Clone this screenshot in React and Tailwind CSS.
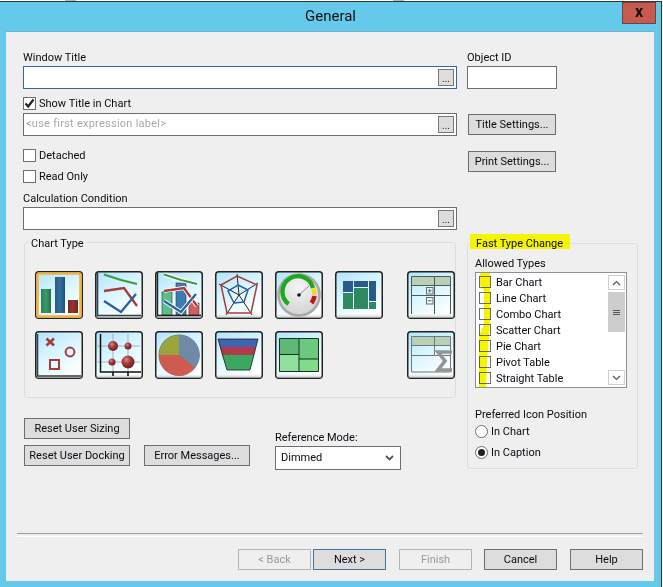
import React from "react";

const FONT = "font-['Roboto',sans-serif]";
const TEXT = "text-[11px] text-[#0a0a14]";

function Label({ children, className = "" }) {
    return <div className={`h-4 leading-4 whitespace-nowrap ${TEXT} ${className}`}>{children}</div>;
}

function Button({ children, disabled, primary, className = "" }) {
    let look = "border-[#6e6e6e] bg-[#dddddd] text-[#0a0a14]";
    if (disabled) look = "border-[#b5b5b5] bg-[#efefef] text-[#9a9a9a]";
    if (primary) look = "border-[#3c76a6] bg-[#dddddd] text-[#0a0a14]";
    return (
        <div className={`h-[21px] border box-border pt-[1px] flex items-center justify-center text-[11px] whitespace-nowrap ${look} ${className}`}>
            {children}
        </div>
    );
}

function TextBox({ focused, placeholder, browse = true, className = "" }) {
    return (
        <div className={`h-[23px] border bg-white flex items-center justify-between pr-[2px] pl-[2px] ${focused ? "border-[#2f6a9b]" : "border-[#6e6e6e]"} ${className}`}>
            <span className="text-[11px] tracking-[0.25px] text-[#a8a8a8]">{placeholder}</span>
            {browse && (
                <span className="w-4 h-[17px] border border-[#777] bg-[#dddddd] text-[10px] leading-[17px] text-center text-[#222]">...</span>
            )}
        </div>
    );
}

function CheckRow({ checked, children, className = "" }) {
    return (
        <div className={`h-4 flex items-center gap-[3px] ${TEXT} ${className}`}>
            <span className="w-[13px] h-[13px] border border-[#6e6e6e] bg-white flex items-center justify-center">
                {checked && (
                    <svg width="11" height="11" viewBox="0 0 11 11">
                        <path d="M1.5 5.5 L4.2 8.5 L9.5 1.5" fill="none" stroke="#222" strokeWidth="2.2" />
                    </svg>
                )}
            </span>
            <span className="pt-[2px]">{children}</span>
        </div>
    );
}

function Radio({ checked, children, className = "" }) {
    return (
        <div className={`h-4 flex items-center gap-[3px] ${TEXT} ${className}`}>
            <span className="w-[13px] h-[13px] rounded-full border border-[#6e6e6e] bg-white flex items-center justify-center">
                {checked && <span className="w-[7px] h-[7px] rounded-full bg-[#222]" />}
            </span>
            <span className="pt-[2px]">{children}</span>
        </div>
    );
}

// shared tile behind every chart type icon
function Tile({ selected, children }) {
    return (
        <svg width="48" height="48" viewBox="0 0 48 48" className="shrink-0 block">
            <defs>
                <linearGradient id="tileBg" x1="0.1" y1="0" x2="0.6" y2="1">
                    <stop offset="0" stopColor="#b4e4fb" />
                    <stop offset="0.45" stopColor="#d8f5ff" />
                    <stop offset="0.85" stopColor="#f4fcff" />
                    <stop offset="1" stopColor="#ffffff" />
                </linearGradient>
                <linearGradient id="tileFloor" x1="0" y1="0" x2="0" y2="1">
                    <stop offset="0" stopColor="#ffffff" stopOpacity="0" />
                    <stop offset="1" stopColor="#9aa0a0" stopOpacity="0.7" />
                </linearGradient>
                <radialGradient id="ball" cx="0.38" cy="0.32" r="0.7">
                    <stop offset="0" stopColor="#d98a8a" />
                    <stop offset="0.45" stopColor="#a33b3b" />
                    <stop offset="1" stopColor="#6e1c1c" />
                </radialGradient>
                <radialGradient id="dial" cx="0.5" cy="0.3" r="0.8">
                    <stop offset="0" stopColor="#f4f4f4" />
                    <stop offset="1" stopColor="#cfcfcf" />
                </radialGradient>
                <linearGradient id="barGreen" x1="0" y1="0" x2="1" y2="0">
                    <stop offset="0" stopColor="#2a8058" />
                    <stop offset="0.5" stopColor="#3a9a6c" />
                    <stop offset="1" stopColor="#236e4a" />
                </linearGradient>
                <linearGradient id="barBlue" x1="0" y1="0" x2="1" y2="0">
                    <stop offset="0" stopColor="#235a8c" />
                    <stop offset="0.5" stopColor="#33709f" />
                    <stop offset="1" stopColor="#1e4f7c" />
                </linearGradient>
                <linearGradient id="barRed" x1="0" y1="0" x2="1" y2="0">
                    <stop offset="0" stopColor="#7e2727" />
                    <stop offset="0.5" stopColor="#983434" />
                    <stop offset="1" stopColor="#722222" />
                </linearGradient>
            </defs>
            <rect x="0.75" y="0.75" width="46.5" height="46.5" rx="3" fill="url(#tileBg)" stroke="#222" strokeWidth="1.5" />
            <rect x="1.5" y="42" width="45" height="5" fill="url(#tileFloor)" />
            {selected && <rect x="2.5" y="2.5" width="43" height="43" rx="1.5" fill="none" stroke="#f4b23c" strokeWidth="2.6" />}
            {children}
        </svg>
    );
}

const BarIcon = () => (
    <Tile selected>
        <rect x="6" y="18" width="10" height="24" fill="url(#barGreen)" />
        <rect x="20" y="6" width="10" height="36" fill="url(#barBlue)" />
        <rect x="33" y="29" width="10" height="13" fill="url(#barRed)" />
    </Tile>
);

const TrendLines = ({ halo }) => {
    const sets = [
        { d: "M9 3.5 L26 9 L42 13", c: "#3f9a3f" },
        { d: "M9 20 L29 17 L42 35", c: "#a83a3a" },
        { d: "M9 30 L26 41 L41 23", c: "#2f5f9e" },
    ];
    return sets.map((s) => (
        <g key={s.c} fill="none">
            {halo && <path d={s.d} stroke="#fff" strokeWidth="4.2" />}
            <path d={s.d} stroke={s.c} strokeWidth="2.3" />
        </g>
    ));
};

const LineIcon = () => (
    <Tile>
        <path d="M2.5 2 V44.5 H46" fill="none" stroke="#34404a" strokeWidth="1.6" />
        <TrendLines />
    </Tile>
);

const ComboIcon = () => (
    <Tile>
        <rect x="7" y="21" width="10" height="23" fill="#58c088" stroke="#333" strokeWidth="0.6" />
        <rect x="21" y="12" width="10" height="32" fill="#3d7cb0" stroke="#333" strokeWidth="0.6" />
        <rect x="34" y="32" width="10" height="12" fill="#d05e5e" stroke="#333" strokeWidth="0.6" />
        <path d="M2.5 2 V44.5 H46" fill="none" stroke="#222" strokeWidth="1.4" />
        <TrendLines halo />
    </Tile>
);

const RadarIcon = () => (
    <Tile>
        <path d="M24 24 L22 3 M24 24 L43 12 M24 24 L37 44 M24 24 L11 44 M24 24 L4 13" stroke="#222" strokeWidth="1" />
        <path d="M22 5 L42 14 L36 42 L12 42 L6 14 Z" fill="none" stroke="#a83a3a" strokeWidth="1.5" />
        <path d="M23 14 L33 19 L29 31 L19 32 L13 20 Z" fill="none" stroke="#2f5f9e" strokeWidth="1.5" />
    </Tile>
);

const GaugeIcon = () => (
    <Tile>
        <circle cx="24" cy="24" r="20.5" fill="url(#dial)" stroke="#a9a9a9" strokeWidth="2.6" />
        <path d="M13.5 33 A15.5 15.5 0 1 1 38 17" fill="none" stroke="#1fa81f" strokeWidth="4.4" />
        <path d="M38.2 17.5 A15.5 15.5 0 0 1 39.6 23.5" fill="none" stroke="#eedc10" strokeWidth="4.6" />
        <path d="M39.5 25 A15.5 15.5 0 0 1 36.5 32" fill="none" stroke="#c01414" strokeWidth="4.6" />
        <path d="M24 24 L34 15" stroke="#777" strokeWidth="0.8" />
        <circle cx="24" cy="24" r="1.8" fill="#111" />
    </Tile>
);

const MekkoIcon = () => (
    <Tile>
        <rect x="8" y="10" width="10" height="11" fill="#285a8e" />
        <rect x="19" y="10" width="14" height="6" fill="#285a8e" />
        <rect x="34" y="10" width="7" height="20" fill="#285a8e" />
        <rect x="8" y="22" width="10" height="16" fill="#2f8a62" />
        <rect x="19" y="17" width="14" height="21" fill="#2f8a62" />
        <rect x="34" y="31" width="7" height="7" fill="#2f8a62" />
    </Tile>
);

const PivotIcon = () => (
    <Tile>
        <rect x="4.5" y="5.5" width="39" height="9" fill="#b9cfb6" />
        <path d="M4.5 5.5 H43.5 V43 M4.5 5.5 V43 M4.5 14.5 H43.5 M4.5 24.5 H43.5 M27.5 5.5 V43" fill="none" stroke="#4d5a5a" strokeWidth="1" />
        <rect x="19.5" y="16.5" width="6.5" height="6.5" fill="none" stroke="#6a6a6a" />
        <path d="M21 19.75 H24.5 M22.75 18 V21.5" stroke="#6a6a6a" />
        <rect x="19.5" y="26.5" width="6.5" height="6.5" fill="none" stroke="#6a6a6a" />
        <path d="M21 29.75 H24.5" stroke="#6a6a6a" />
    </Tile>
);

const ScatterIcon = () => (
    <Tile>
        <path d="M2.5 3 V45 H46" fill="none" stroke="#34404a" strokeWidth="1.6" />
        <path d="M11.5 7.5 L19 14.5 M19 7.5 L11.5 14.5" stroke="#a83a3a" strokeWidth="2.6" />
        <circle cx="35" cy="21" r="4.4" fill="none" stroke="#a83a3a" strokeWidth="2" />
        <rect x="15" y="29" width="9" height="9" fill="none" stroke="#a83a3a" strokeWidth="2" />
    </Tile>
);

const BubbleIcon = () => (
    <Tile>
        <path d="M1 15 H45 M1 31 H45 M18 3 V45 M33 3 V45" stroke="#8d9a9e" strokeWidth="0.7" />
        <path d="M5.5 3 V41 H46 M18 41 V45 M33 41 V45" fill="none" stroke="#111" strokeWidth="1.5" />
        <circle cx="18" cy="15" r="5" fill="url(#ball)" />
        <circle cx="33" cy="15" r="3.5" fill="url(#ball)" />
        <circle cx="17" cy="31" r="3.5" fill="url(#ball)" />
        <circle cx="33" cy="31" r="6.5" fill="url(#ball)" />
    </Tile>
);

const PieIcon = () => (
    <Tile>
        <circle cx="24" cy="24" r="20.5" fill="#6a6a6a" />
        <path d="M24 24 L4 24 A20 20 0 0 1 24 4 Z" fill="#9aa63c" />
        <path d="M24 24 L24 4 A20 20 0 0 1 40 37 Z" fill="#6f8aa8" />
        <path d="M24 24 L40 37 A20 20 0 0 1 4 24 Z" fill="#cf5b50" />
    </Tile>
);

const FunnelIcon = () => (
    <Tile>
        <path d="M3 8 H43 L41 16 H5 Z" fill="#3f64b0" />
        <path d="M5 16 H41 L39 24 H7 Z" fill="#b23a48" />
        <path d="M7 24 H39 L35 39 H12 Z" fill="#3aa860" />
        <path d="M3 8 H43 L35 39 H12 Z" fill="none" stroke="#222" strokeWidth="0.8" />
    </Tile>
);

const BlockIcon = () => (
    <Tile>
        <rect x="4.5" y="7.5" width="19.5" height="16" fill="#5fb877" />
        <rect x="24" y="7.5" width="19.5" height="20.5" fill="#6cc87f" />
        <rect x="4.5" y="23.5" width="19.5" height="17" fill="#8fe09c" />
        <rect x="24" y="28" width="19.5" height="12.5" fill="#7fdc88" />
        <path d="M4.5 7.5 H43.5 V40.5 H4.5 Z M24 7.5 V40.5 M4.5 23.5 H24 M24 28 H43.5" fill="none" stroke="#16301e" strokeWidth="1" />
    </Tile>
);

const TableIcon = () => (
    <Tile>
        <rect x="4.5" y="5.5" width="39" height="9" fill="#b9cfb6" />
        <path d="M4.5 5.5 H43.5 V41 M4.5 5.5 V41 H43.5 M4.5 14.5 H43.5 M4.5 24.5 H43.5 M27.5 5.5 V24.5" fill="none" stroke="#6d7a7a" strokeWidth="1" />
        <path d="M45 21 H31 L38 30 L31 39 H45" fill="none" stroke="#949494" strokeWidth="3.6" />
    </Tile>
);

const ALLOWED = ["Bar Chart", "Line Chart", "Combo Chart", "Scatter Chart", "Pie Chart", "Pivot Table", "Straight Table"];

function AllowedList() {
    return (
        <div className="relative h-[116px] w-[152px] border border-[#8a8f98] bg-white flex">
            <div className="flex-1 pl-[2px] pt-[1px]">
                {ALLOWED.map((name) => (
                    <div key={name} className={`h-4 flex items-center gap-[5px] whitespace-nowrap ${TEXT}`}>
                        <span className="w-3 h-3 border border-[#6e6e6e] bg-white ml-[1px]" />
                        <span className="pt-[2px]">{name}</span>
                    </div>
                ))}
            </div>
            <div className="w-[17px] flex flex-col mr-[1px] my-[2px]">
                <span className="h-[15px] border border-[#d0d0d0] flex items-center justify-center">
                    <svg width="9" height="6" viewBox="0 0 9 6"><path d="M1 5 L4.5 1.5 L8 5" fill="none" stroke="#555" strokeWidth="1.2" /></svg>
                </span>
                <span className="mt-[2px] h-[40px] bg-[#cdcdcd] flex flex-col items-center justify-center gap-[1px]">
                    <i className="w-[7px] h-[1px] bg-[#555]" />
                    <i className="w-[7px] h-[1px] bg-[#555]" />
                    <i className="w-[7px] h-[1px] bg-[#555]" />
                </span>
                <span className="flex-1" />
                <span className="h-[15px] border border-[#d0d0d0] flex items-center justify-center">
                    <svg width="9" height="6" viewBox="0 0 9 6"><path d="M1 1 L4.5 4.5 L8 1" fill="none" stroke="#555" strokeWidth="1.2" /></svg>
                </span>
            </div>
            {/* hand drawn highlighter stroke over the check boxes */}
            <svg className="absolute left-0 top-0 pointer-events-none" width="16" height="114" viewBox="0 0 16 114">
                <path d="M4 0 H14 V18 L14 50 L13 62 L11 90 L10 114 H3 L3 90 L3 62 L8 52 L8 18 L4 12 Z" fill="#f5f500" style={{ mixBlendMode: "multiply" }} />
            </svg>
        </div>
    );
}

export default function App() {
    return (
        <div className={`w-[663px] h-[587px] bg-white overflow-hidden ${FONT}`}>
            <div className="h-[1px] flex">
                <span className="ml-[65px] w-[11px] bg-[#b8b8b8]" />
                <span className="ml-[317px] w-[11px] bg-[#b8b8b8]" />
            </div>
            <div className="h-[586px] w-[662px] border-t border-r border-[#333] bg-[#65c9ec] flex flex-col">
                <div className="h-[29px] relative shrink-0 flex items-center justify-center text-[15px] text-[#111]">
                    General
                    <div className="absolute right-[5px] top-0 w-[34px] h-[22px] bg-[#c75b50] border border-[#6b4540] flex items-center justify-center text-[#111] text-[16px] font-bold leading-none pb-[2px]">
                        x
                    </div>
                </div>
                <div className="ml-[6px] w-[648px] h-[550px] bg-[#efefef] border-t border-[#6eb3cf] flex flex-col">
                    <div className="flex pl-[17px] pt-[18px] gap-[10px]">
                        <div className="w-[434px] shrink-0">
                            <Label>Window Title</Label>
                            <TextBox focused />
                            <CheckRow checked className="mt-[6px]">Show Title in Chart</CheckRow>
                            <TextBox className="mt-[2px]" placeholder={"<use first expression label>"} />
                            <CheckRow className="mt-[11px]">Detached</CheckRow>
                            <CheckRow className="mt-[5px]">Read Only</CheckRow>
                            <Label className="mt-[7px]">Calculation Condition</Label>
                            <TextBox />

                            <div className="relative mt-[12px] ml-[1px] h-[156px] w-[432px] border border-[#d5dfe6] rounded-[3px] pt-[28px] pl-[10px]">
                                <div className={`absolute left-[4px] -top-[8px] h-4 px-[2px] bg-[#efefef] leading-[17px] ${TEXT}`}>Chart Type</div>
                                <div className="flex gap-3">
                                    <BarIcon />
                                    <LineIcon />
                                    <ComboIcon />
                                    <RadarIcon />
                                    <GaugeIcon />
                                    <MekkoIcon />
                                    <div className="ml-3"><PivotIcon /></div>
                                </div>
                                <div className="flex gap-3 mt-3">
                                    <ScatterIcon />
                                    <BubbleIcon />
                                    <PieIcon />
                                    <FunnelIcon />
                                    <BlockIcon />
                                    <div className="ml-[72px]"><TableIcon /></div>
                                </div>
                            </div>

                            <div className="flex ml-[1px] mt-[20px]">
                                <div className="w-[106px]">
                                    <Button>Reset User Sizing</Button>
                                    <Button className="mt-[6px]">Reset User Docking</Button>
                                </div>
                                <Button className="w-[106px] ml-[14px] mt-[27px]">Error Messages...</Button>
                                <div className="ml-[25px] mt-[12px]">
                                    <Label>Reference Mode:</Label>
                                    <div className={`w-[126px] h-6 border border-[#6e6e6e] bg-white flex items-center justify-between pl-[5px] pr-[6px] ${TEXT}`}>
                                        Dimmed
                                        <svg width="9" height="6" viewBox="0 0 9 6"><path d="M1 1 L4.5 4.5 L8 1" fill="none" stroke="#555" strokeWidth="1.8" /></svg>
                                    </div>
                                </div>
                            </div>
                        </div>

                        <div className="w-[172px]">
                            <Label>Object ID</Label>
                            <TextBox browse={false} className="w-[90px]" />
                            <Button className="w-[88px] ml-[1px] mt-[25px]">Title Settings...</Button>
                            <Button className="w-[88px] ml-[1px] mt-[16px]">Print Settings...</Button>
                            <div className="relative mt-[71px] h-[226px] w-[171px] border border-[#d5dfe6] rounded-[3px] pl-[7px] pt-[12px]">
                                <div className={`absolute left-[2px] -top-[10px] h-[15px] pl-[6px] w-[100px] bg-[#f5f500] leading-[19px] whitespace-nowrap ${TEXT}`}>Fast Type Change</div>
                                <Label>Allowed Types</Label>
                                <AllowedList />
                                <Label className="mt-[19px]">Preferred Icon Position</Label>
                                <Radio>In Chart</Radio>
                                <Radio checked className="mt-[5px]">In Caption</Radio>
                            </div>
                        </div>
                    </div>

                    <div className="mt-auto mx-[11px] border-t border-[#a0a0a0] border-b border-b-white h-[2px] box-content" />
                    <div className="flex justify-end mr-[11px] mt-[12px] mb-[11px]">
                        <Button disabled className="w-[73px]">&lt; Back</Button>
                        <Button primary className="w-[73px] ml-[2px]">Next &gt;</Button>
                        <Button disabled className="w-[73px] ml-[13px]">Finish</Button>
                        <Button className="w-[73px] ml-3">Cancel</Button>
                        <Button className="w-[73px] ml-[13px]">Help</Button>
                    </div>
                </div>
            </div>
        </div>
    );
}
